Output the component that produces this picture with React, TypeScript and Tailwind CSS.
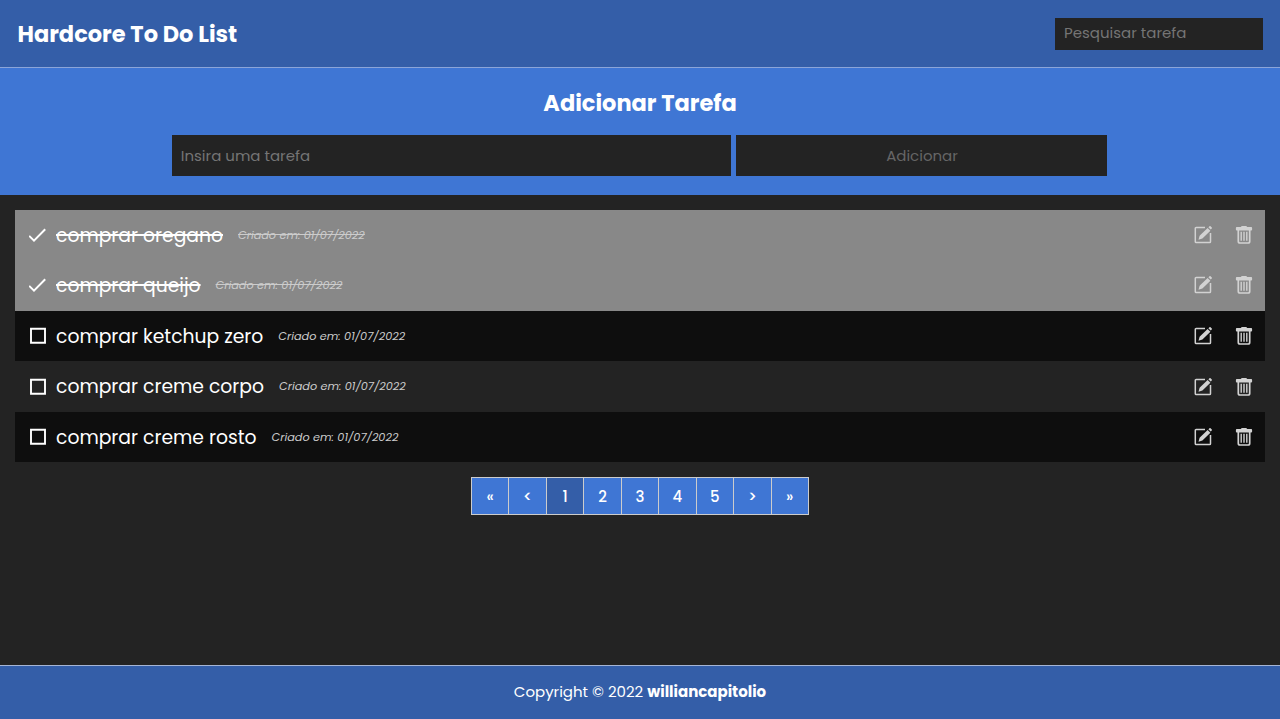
import { useState } from 'react';

const tasks = [
  { name: 'comprar oregano', done: true },
  { name: 'comprar queijo', done: true },
  { name: 'comprar ketchup zero', done: false },
  { name: 'comprar creme corpo', done: false },
  { name: 'comprar creme rosto', done: false },
];

const pages = ['«', '<', '1', '2', '3', '4', '5', '>', '»'];

function CheckIcon() {
  return (
    <svg width="18" height="18" viewBox="0 0 18 18" fill="none" stroke="currentColor" strokeWidth="2" className="block">
      <path d="M.2 9.9 5 14.6 16.2 3.3" />
    </svg>
  );
}

function SquareIcon() {
  return (
    <svg width="18" height="18" viewBox="0 0 18 18" fill="none" stroke="currentColor" strokeWidth="1.9" className="block">
      <path d="M2 1.7h14v14H2z" />
    </svg>
  );
}

function EditIcon() {
  return (
    <svg width="18" height="18" viewBox="0 0 18 18" fill="none" className="block">
      <path d="M11 1.5H2.2c-.6 0-.9.3-.9.9v13.3c0 .6.3.9.9.9h13.4c.6 0 .9-.3.9-.9V7" stroke="currentColor" strokeWidth="1.5" />
      <path d="m4.5 13.8 1.1-4 8-7.9 2.8 2.8-8 7.9zM14.4 1.2l.9-.8c.5-.5 1-.4 1.4 0l.9.9c.4.4.4 1 0 1.4l-.9.9z" fill="currentColor" />
    </svg>
  );
}

function TrashIcon() {
  return (
    <svg width="18" height="18" viewBox="0 0 18 18" fill="none" className="block">
      <path d="M1.7 1.1h4.1C6.2.3 6.8 0 7.5 0h3c.7 0 1.3.3 1.7 1.1h4.1c.5 0 .8.3.8.8v1.9c0 .5-.3.8-.8.8H1.7c-.5 0-.8-.3-.8-.8V1.9c0-.5.3-.8.8-.8z" fill="currentColor" />
      <path d="M3.3 4v11.2c0 1.2.6 1.8 1.6 1.8h8.2c1 0 1.6-.6 1.6-1.8V4" stroke="currentColor" strokeWidth="1.7" />
      <path d="M6.2 5.7v9M9 5.7v9M11.8 5.7v9" stroke="currentColor" strokeWidth="1.4" />
    </svg>
  );
}

export default function App() {
  const [task, setTask] = useState('');
  const [query, setQuery] = useState('');
  return (
    <div className="flex h-[719px] flex-col bg-[#232323] font-['Poppins','Inter',sans-serif] text-white">
      <header className="flex h-[68px] shrink-0 items-center justify-between border-b border-[#8ba5d8] bg-[#345ea8] pr-[17px] pl-[17.5px]">
        <h1 className="pt-[2px] text-[22.5px] font-bold whitespace-nowrap">Hardcore To Do List</h1>
        <input
          value={query}
          onChange={(e) => setQuery(e.target.value)}
          placeholder="Pesquisar tarefa"
          className="h-8 w-[208px] bg-[#232323] px-[9px] pb-[2px] text-[15px] outline-none placeholder:text-[#757575]"
        />
      </header>

      <section className="flex h-[126.5px] shrink-0 flex-col items-center bg-[#3f76d4] pt-[18px]">
        <h2 className="text-[22.5px] leading-[34px] font-bold whitespace-nowrap">Adicionar Tarefa</h2>
        <form className="mt-[15px] flex gap-[5px] pr-px" onSubmit={(e) => e.preventDefault()}>
          <input
            value={task}
            onChange={(e) => setTask(e.target.value)}
            placeholder="Insira uma tarefa"
            className="h-[41px] w-[559px] bg-[#232323] px-[9px] text-[15px] outline-none placeholder:text-[#757575]"
          />
          <button disabled className="h-[41px] w-[371.5px] bg-[#232323] pt-[2px] pl-px text-[15px] text-[#666666]">
            Adicionar
          </button>
        </form>
      </section>

      <main className="flex flex-1 flex-col items-center px-[15px] pt-[15px]">
        <ul className="w-full">
          {tasks.map((t) => (
            <li
              key={t.name}
              className={
                'flex h-[50.6px] items-center pr-[12px] pl-[14px] ' +
                (t.done ? 'bg-[#888888]' : 'odd:bg-[#0e0e0e]')
              }
            >
              {t.done ? <CheckIcon /> : <SquareIcon />}
              <span
                className={
                  'ml-[9px] pt-[1.6px] text-[18.75px] whitespace-nowrap ' + (t.done ? 'line-through decoration-2' : '')
                }
              >
                {t.name}
              </span>
              <span
                className={
                  'ml-[15px] flex-1 text-[11.25px] whitespace-nowrap text-[#cccccc] italic ' + (t.done ? 'pt-px line-through' : '')
                }
              >
                Criado em: 01/07/2022
              </span>
              <span className="flex gap-[23px] text-[#d2d2d2]">
                <EditIcon />
                <TrashIcon />
              </span>
            </li>
          ))}
        </ul>

        <nav className="mt-[14.5px] flex border-l border-[#cccccc]">
          {pages.map((p) => (
            <button
              key={p}
              className={
                'h-[38px] w-[37.45px] border-y border-r border-[#cccccc] pt-[2px] text-[15px] font-medium ' +
                (p === '1' ? 'bg-[#345ea8]' : 'bg-[#3f76d4]')
              }
            >
              {p}
            </button>
          ))}
        </nav>
      </main>

      <footer className="flex h-[54.5px] shrink-0 items-center justify-center border-t border-[#a5b5d5] bg-[#345ea8] text-[15px] whitespace-pre">
        Copyright © 2022 <strong>williancapitolio</strong>
      </footer>
    </div>
  );
}
